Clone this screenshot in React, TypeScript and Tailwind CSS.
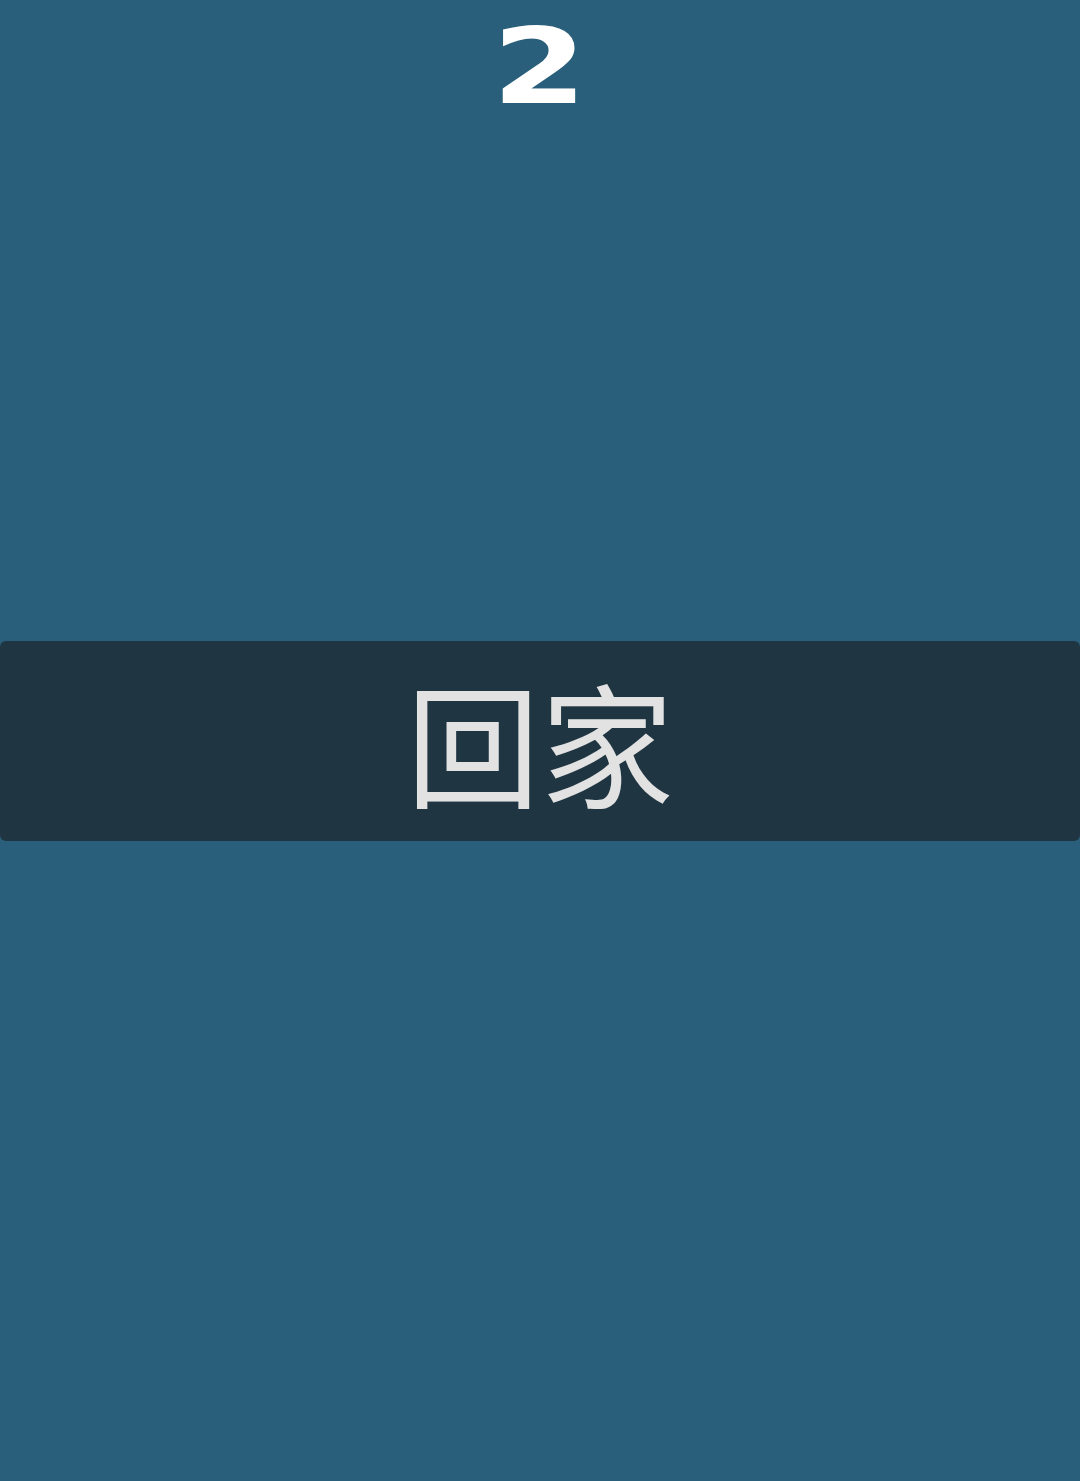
export default function App() {
  return (
    <main className="flex h-[1481px] w-full flex-col bg-[#295f7a]">
      <div className="flex h-[136px] items-start justify-center">
        <span className="mt-[7px] inline-block scale-x-[1.3] font-['DejaVu_Sans',sans-serif] text-[105px] font-bold leading-[120px] text-white">
          2
        </span>
      </div>

      <div className="mt-[505px] flex h-[200px] w-full items-center justify-center rounded-[6px] bg-[#203542]">
        <span className="-mt-[2px] font-['Noto_Sans_CJK_SC',sans-serif] text-[134px] leading-none text-[#e2e2e2]">
          回家
        </span>
      </div>
    </main>
  );
}
